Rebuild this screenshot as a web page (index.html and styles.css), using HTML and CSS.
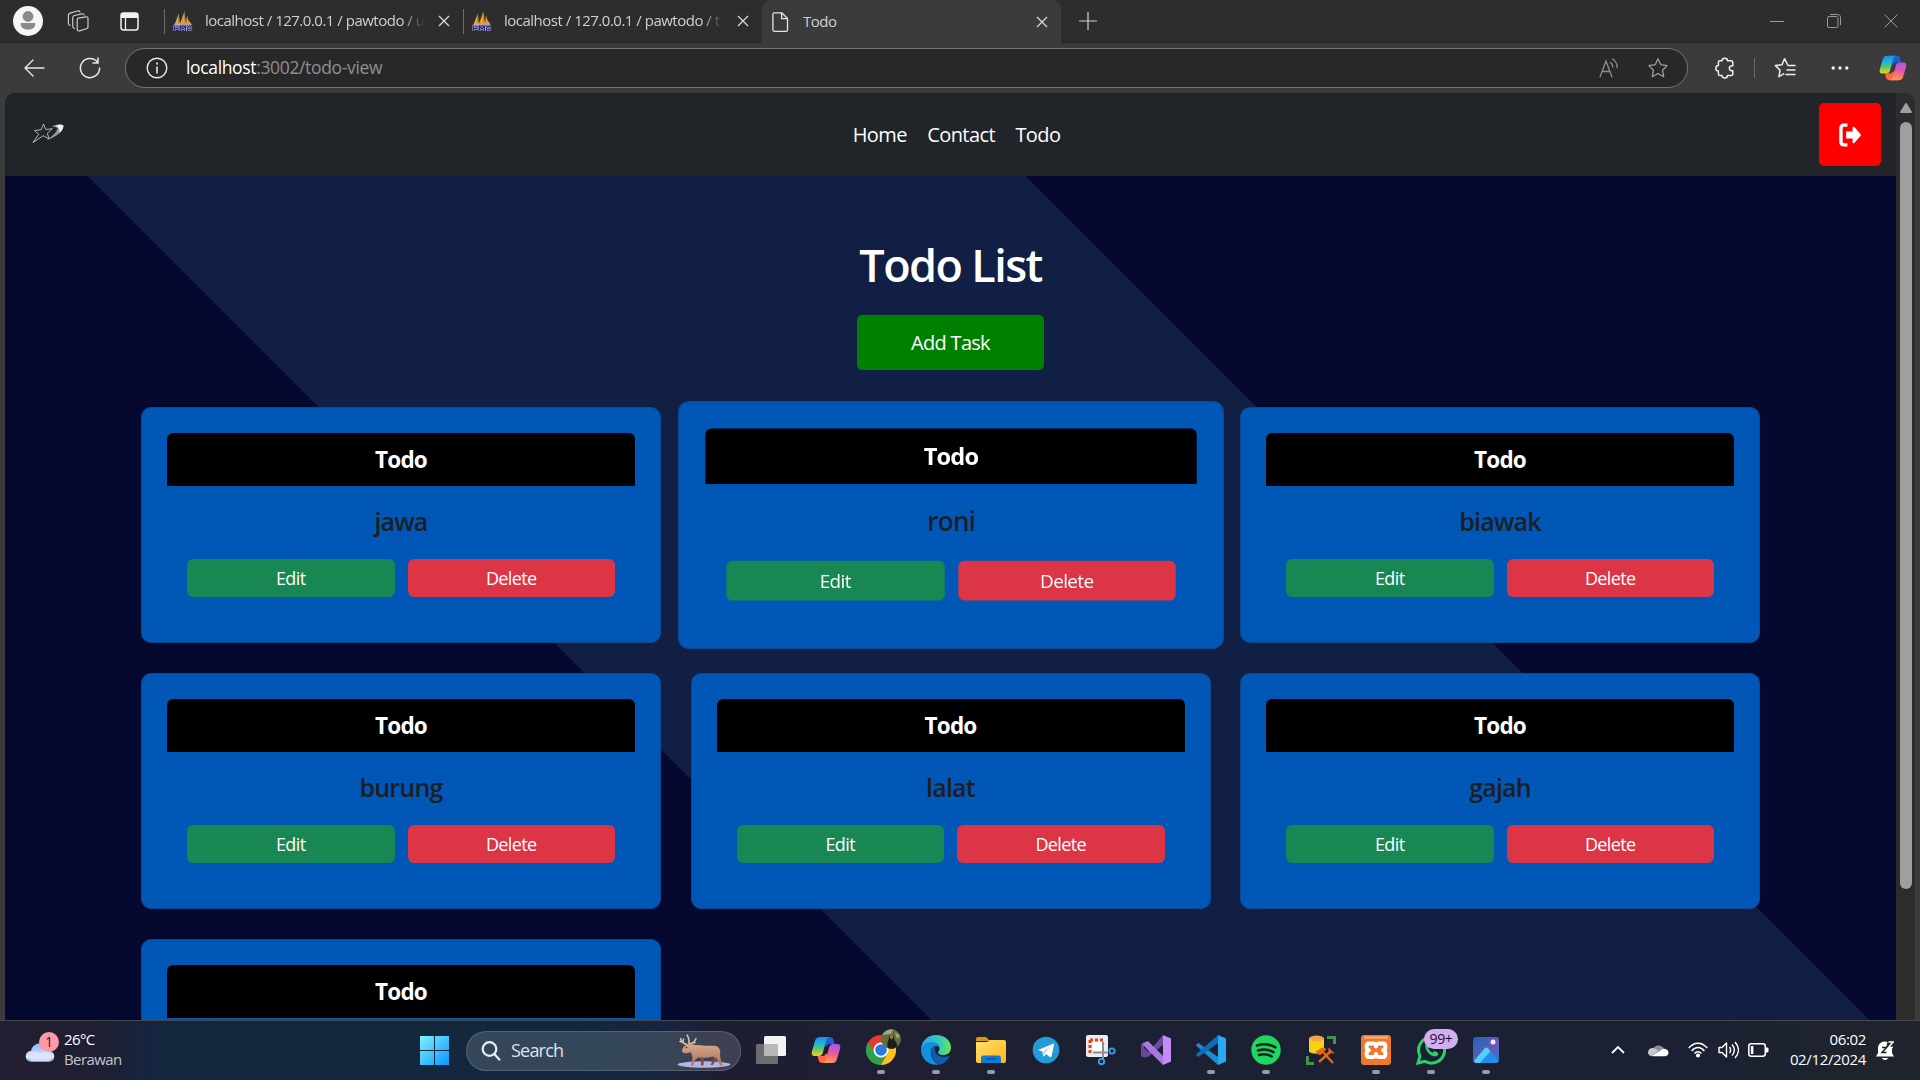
FILE: index.html
```html
<!DOCTYPE html>
<html lang="en">
<head>
<meta charset="utf-8">
<title>Todo</title>
<link rel="stylesheet" href="styles.css">
</head>
<body>
<svg class="defs" aria-hidden="true">
  <defs>
    <linearGradient id="cpA" x1="0" y1="0" x2="0" y2="1"><stop offset="0" stop-color="#1f8df5"/><stop offset=".35" stop-color="#22b3dc"/><stop offset=".65" stop-color="#66c95e"/><stop offset="1" stop-color="#f7d01c"/></linearGradient>
    <linearGradient id="cpB" x1="0.6" y1="0" x2="0.4" y2="1"><stop offset="0" stop-color="#a259f0"/><stop offset=".5" stop-color="#ec5a9c"/><stop offset="1" stop-color="#ff9a4d"/></linearGradient>
    <linearGradient id="win" x1="0" y1="0" x2="1" y2="1"><stop offset="0" stop-color="#7df3ff"/><stop offset="1" stop-color="#0a95ff"/></linearGradient>
    <linearGradient id="edgeA" x1="0" y1="0" x2="1" y2="0"><stop offset="0" stop-color="#2aa5e6"/><stop offset=".6" stop-color="#35c9bd"/><stop offset="1" stop-color="#67e84d"/></linearGradient>
    <linearGradient id="fold" x1="0" y1="0" x2="1" y2="1"><stop offset="0" stop-color="#ffdf72"/><stop offset="1" stop-color="#fbb716"/></linearGradient>
    <linearGradient id="cld" x1="0" y1="0" x2="0" y2="1"><stop offset="0" stop-color="#8db1f4"/><stop offset=".75" stop-color="#dbe6fb"/><stop offset="1" stop-color="#7c9be0"/></linearGradient>
    <linearGradient id="photo" x1="0" y1="0" x2="1" y2="1"><stop offset="0" stop-color="#1767b8"/><stop offset=".6" stop-color="#6b5bb8"/><stop offset="1" stop-color="#1f7ad0"/></linearGradient>
    <linearGradient id="moose" x1="0" y1="0" x2="0" y2="1"><stop offset="0" stop-color="#d8a68a"/><stop offset="1" stop-color="#a8745a"/></linearGradient>
    <symbol id="copilot" viewBox="0 0 30 30">
      <path d="M9 2h10c2 0 3 1 3.600 3l1 4h-5c-2 0-3 1-3.500 3z" fill="#1c5fd6"/>
      <path d="M21 28H11c-2 0-3-1-3.500-3l-1-4h5c2 0 3-1 3.500-3z" fill="#ff6a45"/>
      <path d="M9 2h9c-2 1-2.800 3-3.500 6l-2.600 9.500c-.7 2.500-2 3.500-4 3.500H4c-3 0-3.800-2-3-5L4 6c.8-3 2.500-4 5-4z" fill="url(#cpA)"/>
      <path d="M21 28h-9c2-1 2.800-3 3.500-6l2.600-9.500c.7-2.500 2-3.500 4-3.500H26c3 0 3.800 2 3 5l-3 10c-.8 3-2.500 4-5 4z" fill="url(#cpB)"/>
    </symbol>
    <symbol id="pma" viewBox="0 0 20 20">
      <path d="M5.800 2.500L5 13.500H1.500z" fill="#f6a21b"/><path d="M5.800 2.500l1.200 11H5z" fill="#a8a49c"/>
      <path d="M11.500.200L11 13.200H6.800z" fill="#f79a12"/><path d="M11.500.200l1.600 12.800H11z" fill="#a8a49c"/>
      <path d="M14 4.500l1.300 4.500 3.200 4H13z" fill="#f79a12"/><path d="M1.500 13.800h17" stroke="#d5d0c8" stroke-width="1"/>
      <path d="M1.500 20v-5H5v2.500H1.500M7.500 20v-5l2.500 3 2.500-3v5M14.500 20v-3l1.800-2 1.800 2v3m-3.600-1.500h3.600" fill="none" stroke="#c9c9f0" stroke-width="2"/>
      <path d="M1.500 20v-5H5v2.500H1.500M7.500 20v-5l2.500 3 2.500-3v5M14.500 20v-3l1.800-2 1.800 2v3m-3.600-1.500h3.600" fill="none" stroke="#2b2b86" stroke-width="1.200"/>
    </symbol>
    <symbol id="x" viewBox="0 0 12 12"><path d="M1 1l10 10M11 1L1 11" stroke="currentColor" stroke-width="1.300" fill="none"/></symbol>
    <symbol id="star" viewBox="0 0 22 22"><path d="M11 1.800l2.800 5.900 6.300.900-4.600 4.600 1.200 6.500L11 16.500l-5.700 3.200 1.200-6.500L1.900 8.600l6.300-.9z" fill="none" stroke="currentColor" stroke-width="1.300" stroke-linejoin="round"/></symbol>
  </defs>
</svg>

<div class="tabstrip">
  <svg class="profile" viewBox="0 0 30 30"><circle cx="15" cy="15" r="15" fill="#f5f5f5"/><circle cx="15" cy="10.500" r="5" fill="#8b8b8b" stroke="#666" stroke-width=".6"/><path d="M8 17.500h14c0 4-3 5.700-7 5.700s-7-1.700-7-5.700z" fill="#8b8b8b" stroke="#666" stroke-width=".6"/></svg>
  <svg class="workspaces" viewBox="0 0 22 22" fill="none" stroke="#c9c9c9" stroke-width="1.200" stroke-linejoin="round" stroke-linecap="round"><path d="M11.500 8.200l7.500-1.400c1.300-.2 2 .4 2 1.600v8.400c0 1-.5 1.700-1.500 2l-7 2c-1.400.4-2.300-.3-2.300-1.600V10c0-1 .4-1.600 1.300-1.800z"/><path d="M7.500 18.500c-1.200-.3-1.800-1-1.800-2.200V7.800c0-1.300.6-2 1.800-2.300l7.500-1.700c1.200-.2 2 .2 2.200 1.200"/><path d="M3 15.500c-1-.3-1.600-1-1.600-2.200V5.500c0-1.300.6-2 1.700-2.400L10.500 1c1.200-.3 2 0 2.400 1"/></svg>
  <svg class="tabactions" viewBox="0 0 19 19"><rect x="1" y="1" width="17" height="17" rx="2.500" fill="none" stroke="#f2f2f2" stroke-width="1.500"/><path d="M1 3.500C1 2 2 1 3.500 1h12C17 1 18 2 18 3.500V6H1z" fill="#f2f2f2"/><path d="M5.500 6v12" stroke="#f2f2f2" stroke-width="1.300"/></svg>
  <div class="tab">
    <svg class="favicon"><use href="#pma"/></svg>
    <span class="tab-title faded">localhost / 127.0.0.1 / pawtodo / u</span>
    <svg class="close"><use href="#x"/></svg>
  </div>
  <div class="tab">
    <svg class="favicon"><use href="#pma"/></svg>
    <span class="tab-title faded">localhost / 127.0.0.1 / pawtodo / t</span>
    <svg class="close"><use href="#x"/></svg>
  </div>
  <div class="tab active">
    <svg class="favicon" viewBox="0 0 20 20" fill="none" stroke="#e4e4e4" stroke-width="1.300" stroke-linejoin="round"><path d="M3.500.800h7.300l5.700 5.700v11.200c0 1-.6 1.600-1.600 1.600H3.500c-1 0-1.600-.6-1.600-1.600V2.400C1.900 1.400 2.500.8 3.500.8zM10.600.9v5.800h5.800"/></svg>
    <span class="tab-title">Todo</span>
    <svg class="close"><use href="#x"/></svg>
  </div>
  <svg class="newtab" viewBox="0 0 18 18"><path d="M9 0v18M0 9h18" stroke="#d0d0d0" stroke-width="1.200"/></svg>
  <div class="wincontrols">
    <svg viewBox="0 0 14 14"><path d="M0 7.500h14" stroke="#9a9a9a"/></svg>
    <svg viewBox="0 0 14 14" fill="none" stroke="#9a9a9a"><rect x=".5" y="2.500" width="10.500" height="11" rx="1.500"/><path d="M3 .5h7.500c2 0 3 1 3 3V11"/></svg>
    <svg viewBox="0 0 14 14"><path d="M.5.500l13 13M13.500.500l-13 13" stroke="#9a9a9a"/></svg>
  </div>
</div>

<div class="toolbar">
  <svg class="back" viewBox="0 0 21 18" fill="none" stroke="#e8e8e8" stroke-width="1.400" stroke-linecap="round" stroke-linejoin="round"><path d="M20 9H1M9 1L1 9l8 8"/></svg>
  <svg class="reload" viewBox="0 0 22 22" fill="none" stroke="#e8e8e8" stroke-width="1.500" stroke-linecap="round"><path d="M18.500 5A9.600 9.600 0 1 0 20.600 11M19 1v5h-5"/></svg>
  <div class="address">
    <svg class="info" viewBox="0 0 22 22" fill="none" stroke="#e8e8e8" stroke-width="1.400"><circle cx="11" cy="11" r="9.800"/><path d="M11 9.500v7" stroke-width="1.600"/><path d="M11 5.500v2" stroke-width="1.800"/></svg>
    <span class="url"><b>localhost</b>:3002/todo-view</span>
    <svg class="read" viewBox="0 0 20 20" fill="none" stroke="#8f8f8f" stroke-width="1.300" stroke-linecap="round"><path d="M1 19L7 3l6 16M3.200 13.500h7.600M11.500 4.500c1.500 1 2.300 2.500 2.300 4.500M13.500 1c3 1.800 4.700 4.500 4.700 8.500"/></svg>
    <svg class="fav"><use href="#star"/></svg>
  </div>
  <svg class="puzzle" viewBox="0 0 20 22" fill="none" stroke="#efefef" stroke-width="1.500" stroke-linejoin="round"><path d="M7 3.800C7 .500 12.500.500 12.500 3.800h3.700c1 0 1.600.6 1.600 1.600v3.300c-4.600-.5-4.600 5.500 0 5v3.200c0 1-.6 1.600-1.600 1.600h-3.700c0 3.300-5.500 3.300-5.500 0H5c-1 0-1.600-.6-1.600-1.600V14C0 14 0 8.400 3.400 8.400v-3c0-1 .6-1.600 1.600-1.600z"/></svg>
  <span class="tbsep"></span>
  <svg class="favlist" viewBox="0 0 22 22" fill="none" stroke="#efefef" stroke-width="1.500" stroke-linejoin="round" stroke-linecap="round"><path d="M13.500 7.500L10.500 1.700 8 7.700l-6.500.9 4.600 4.600-1.200 6.500 4.800-2.800M14 8.500h7M13 13h8M12 17.500h9"/></svg>
  <svg class="dots" viewBox="0 0 18 6" fill="#efefef"><circle cx="2.200" cy="3" r="1.700"/><circle cx="9" cy="3" r="1.700"/><circle cx="15.800" cy="3" r="1.700"/></svg>
  <svg class="tb-copilot"><use href="#copilot"/></svg>
</div>

<div class="viewport">
  <div class="page">
    <nav class="navbar">
      <svg class="logo" viewBox="0 0 34 24"><path d="M12.500 3l2.200 5.500 6.600-.8-5 4.600 1.900 5.700-6-3.300L2 21.500l5.800-8.300L3.500 9.500l6.600-.7z" fill="none" stroke="#d2d2d2" stroke-width="1" opacity=".8"/><path d="M20.500 5.700C25 3.400 29 2.600 32.500 4.500c-.3 4.500-3.500 8.200-8 10.500-3 2-6 3-9.500 4 5-2.500 11-7.500 11.500-12-1.200-1-3.500-1.200-6-1.300z" fill="#d8d6da" opacity=".65"/><path d="M24 5C27 3.300 30 3 32.500 4.500c0 2.500-1.500 5.500-4 7.500.3-3.500-.5-6.300-4.500-7z" fill="#f3f0f4"/></svg>
      <div class="links"><a>Home</a><a>Contact</a><a>Todo</a></div>
      <div class="logout"><svg viewBox="0 0 26 28"><path d="M10 2.500H6C3.600 2.500 2.400 3.600 2.400 6v16c0 2.400 1.200 3.500 3.600 3.500h4" fill="none" stroke="#fff" stroke-width="4"/><path d="M8.500 11.200c0-.8.5-1.200 1.200-1.200H16V5.500c0-1.200 1.300-1.600 2.100-.8l7.300 8.300c.6.600.6 1.400 0 2l-7.300 8.300c-.8.800-2.100.400-2.100-.8V18H9.700c-.7 0-1.200-.4-1.200-1.200z" fill="#fff"/></svg></div>
    </nav>
    <main class="content">
      <h1>Todo List</h1>
      <div class="add">Add Task</div>
      <div class="grid">
        <div class="card"><div class="head">Todo</div><p>jawa</p><div class="actions"><span class="edit">Edit</span><span class="delete">Delete</span></div></div>
        <div class="card hovered"><div class="head">Todo</div><p>roni</p><div class="actions"><span class="edit">Edit</span><span class="delete">Delete</span></div></div>
        <div class="card"><div class="head">Todo</div><p>biawak</p><div class="actions"><span class="edit">Edit</span><span class="delete">Delete</span></div></div>
        <div class="card"><div class="head">Todo</div><p>burung</p><div class="actions"><span class="edit">Edit</span><span class="delete">Delete</span></div></div>
        <div class="card"><div class="head">Todo</div><p>lalat</p><div class="actions"><span class="edit">Edit</span><span class="delete">Delete</span></div></div>
        <div class="card"><div class="head">Todo</div><p>gajah</p><div class="actions"><span class="edit">Edit</span><span class="delete">Delete</span></div></div>
        <div class="card"><div class="head">Todo</div></div>
      </div>
    </main>
  </div>
  <div class="scrollbar"><svg viewBox="0 0 12 10"><path d="M6 0c.5 0 .8.300 1 .7l4.800 8c.3.700 0 1.300-.8 1.300H1c-.8 0-1.100-.6-.8-1.300L5 .7C5.200.3 5.500 0 6 0z" fill="#a0a0a0"/></svg><div class="thumb"></div></div>
</div>

<div class="taskbar">
  <div class="weather">
    <div class="wicon">
      <svg viewBox="0 0 32 22"><path d="M7 21a6 6 0 0 1-.5-12A10 10 0 0 1 16 1c6 0 9 3.500 9.500 8A6 6 0 0 1 25 21z" fill="url(#cld)"/><path d="M7 20a5.500 5.500 0 0 1 0-9c3-2 7-1 9 1 3-2.500 8-3 11 0 2 3 1 6.500-2 8z" fill="#dbe7fc" opacity=".8"/></svg>
      <span class="wbadge">1</span>
    </div>
    <div class="wtext"><span>26°C</span><span class="dim">Berawan</span></div>
  </div>
  <svg class="start" viewBox="0 0 29 29"><path d="M0 0h14v14H0zM15 0h14v14H15zM0 15h14v14H0zM15 15h14v14H15z" fill="url(#win)"/></svg>
  <div class="search">
    <svg class="mag" viewBox="0 0 20 20" fill="none" stroke="#eceff2" stroke-width="2.200" stroke-linecap="round"><circle cx="8.500" cy="8" r="6.800"/><path d="M13.300 13l5 5.500"/></svg>
    <span>Search</span>
    <svg class="moosepic" viewBox="0 0 54 34"><ellipse cx="27" cy="30.500" rx="26.500" ry="3.200" fill="#b3b4e2"/><path d="M20 21l4 5v5.500h2.400l.6-8zM37 21l-1 5-2.500 5h2.300l4.700-7z" fill="#7e503b"/><path d="M5 16c.8-3 3-5 6-5.500 3-.5 5 0 8 .7 4-.7 8 .8 12 .6 4 0 8-.6 10.500 1.700 2 2 2 5 1.500 7.500.2 3 1.200 6.500 2.500 10.500h-2.300L39.500 24l-4-1.500c-4 1.500-9 1.500-14 .8L18 26l-1.800 5.500H14l1.500-8-1.500-5.300-4.500 1c-2.500.5-5-.7-4.500-3.200z" fill="url(#moose)"/><path d="M10 10.500C7 10 4.500 8 3.500 4.500M5.500 8L3 7.500M12 10c0-3 .5-6-2-9M13 9.500c3 0 5-2 6-5M15 9l3-.5M6 8l.5-3" fill="none" stroke="#dcc0aa" stroke-width="1.500" stroke-linecap="round"/><circle cx="9.500" cy="13.500" r=".8" fill="#30201a"/></svg>
  </div>
  <div class="apps">
    <div class="app"><svg viewBox="0 0 30 30"><rect x="8" y="1" width="22" height="20" rx="1.500" fill="#f3f3f3"/><rect x="0" y="9" width="22" height="20" rx="1.500" fill="#6d6d6d"/><path d="M8 9h12.500c1 0 1.500.500 1.500 1.500V21H9.500C8.500 21 8 20.500 8 19.500z" fill="#b8b8b8"/></svg></div>
    <div class="app"><svg><use href="#copilot"/></svg></div>
    <div class="app run"><svg viewBox="0 0 30 30"><circle cx="15" cy="15" r="15" fill="#e33b2e"/><path d="M2 7.500A15 15 0 0 0 15 30l6.500-11.500H8.500z" fill="#2ba24c"/><path d="M15 30A15 15 0 0 0 28 7.500H15l6.500 11.200z" fill="#fcc31e"/><circle cx="15" cy="15" r="7.500" fill="#fff"/><circle cx="15" cy="15" r="5.800" fill="#2b78e4"/></svg>
      <svg class="avatar" viewBox="0 0 20 20"><circle cx="10" cy="10" r="10" fill="#5f6e3a"/><path d="M1 6c3-5 8-6 11-5.500L10 5zM14 3l5 4-3 3z" fill="#a7a57b"/><path d="M7 19c-2-5 1-8 1-10 0-4 5-4 5 0 0 3 4 5 3 8-2 3-6 3.500-9 2z" fill="#1c1e18"/><path d="M9 8c0-3 3-3 3 0s-3 3-3 0z" fill="#9c7358"/></svg></div>
    <div class="app run"><svg viewBox="0 0 30 30"><path d="M0 15C0 6 7 0 15 0c9 0 15 6 15 12.500 0 5-3.500 7.500-8 7.500-3 0-5-1-5-2.500 0-1 1.500-1.500 1.500-4C18.500 10 15 8 11 8 5 8 1 12 0 15z" fill="url(#edgeA)"/><path d="M0 15C1 10 5 7 11 7c5 0 8 3 8 6.500 0 0-1-2.500-4-2.500-3.500 0-5 3.500-5 7C10 25 16 29.500 18 29.700 8 31 0 24 0 15z" fill="#1290e0"/><path d="M10.500 18c0-4 2-6.800 4.500-7-2 2.500-1.500 9 5 10.500 4 1 7-1 8.500-.5.5.5-3.500 8-10.500 8.700-4-1-7.500-6-7.500-11.700z" fill="#145ba8"/></svg></div>
    <div class="app run"><svg viewBox="0 0 30 30"><path d="M0 4c0-1.200.8-2 2-2h8l4 4H0z" fill="#d9970a"/><path d="M0 7h11l3-2h14c1.200 0 2 .8 2 2v19c0 1.200-.8 2-2 2H2c-1.200 0-2-.8-2-2z" fill="url(#fold)"/><path d="M5 28v-5c0-1.500 1-2.500 2.500-2.500h15c1.500 0 2.500 1 2.500 2.500v5z" fill="#1479d0"/><path d="M10 24h10" stroke="#0b549c" stroke-width="1.500"/></svg></div>
    <div class="app"><svg viewBox="0 0 30 30"><circle cx="15" cy="15" r="13.300" fill="#239bd8"/><path d="M7 15l15-6.300c.8-.3 1.300.1 1 1l-2.500 11.500c-.2 1-.8 1.200-1.600.7l-3.700-2.700-2 1.900c-.5.500-1 .3-1.100-.3l-.8-4.300z" fill="#fff"/><path d="M12 17l8-6-6 6.500-.5 3z" fill="#a8cfe8"/></svg></div>
    <div class="app"><svg viewBox="0 0 30 30"><rect x="0" y="0" width="22" height="22" rx="2" fill="#ececee"/><path d="M4 5h14M4 5v13" fill="none" stroke="#d9441b" stroke-width="3" stroke-dasharray="3 2"/><path d="M7 7h9v9H7z" fill="#fff"/><path d="M17 7v17M7 17.500h15" stroke="#8b9098" stroke-width="2"/><circle cx="26" cy="16" r="2.700" fill="none" stroke="#2ea3e6" stroke-width="1.800"/><circle cx="15.500" cy="26.500" r="2.700" fill="none" stroke="#2ea3e6" stroke-width="1.800"/></svg></div>
    <div class="app"><svg viewBox="0 0 30 30"><path d="M0 9v12l3 1.500L8 17 3 13V7.500z" fill="#6b479c"/><path d="M3 22.500L22 0l1 9L7 22z" fill="#6e4aa0"/><path d="M2 8l5-2 15 15v9L2 10z" fill="#a878e0"/><path d="M22 0l8 3.500v23L22 30z" fill="#c58cf7"/></svg></div>
    <div class="app run"><svg viewBox="0 0 30 30"><path d="M0 10l2.500-2L22 22v8L.5 11z" fill="#1f8ad2"/><path d="M0 20l2.500 2L22 8V0L.5 19z" fill="#0b6fb8"/><path d="M22 0l8 3.500v23L22 30z" fill="#2aa9f3"/></svg></div>
    <div class="app run"><svg viewBox="0 0 30 30"><circle cx="15" cy="15" r="14.700" fill="#1ed760"/><path d="M6 10.500c6-2 13-1.300 18.500 1.800M7 15.500c5-1.500 11-1 15.500 1.600M8 20c4-1.200 9-.8 12.800 1.500" fill="none" stroke="#10251a" stroke-width="2.600" stroke-linecap="round"/></svg></div>
    <div class="app"><svg viewBox="0 0 30 30"><path d="M3 3v13c0 3.500 15 3.500 15 0V3z" fill="#f5d312"/><ellipse cx="10.500" cy="3.500" rx="7.500" ry="3" fill="#f0a64c"/><path d="M21 2.500h7.500V9M1.500 21v7.500H8" fill="none" stroke="#43944a" stroke-width="3"/><path d="M13 27l12-11M15 15l12 13" stroke="#e8680e" stroke-width="2.400"/><path d="M10 17l6-4 4 1-6 6zM23 13v4l5 1" fill="#e8680e" stroke="#e8680e"/></svg></div>
    <div class="app run"><svg viewBox="0 0 30 30"><rect x="0" y="0" width="30" height="30" rx="3" fill="#f0772b"/><path d="M3 2.500h24" stroke="#f7b48a" stroke-width="2"/><path d="M8 8.500h4.500c1.500 0 2.500 1.500 2.500 3 0-1.500 1-3 2.500-3H22c3.200 0 3.200 6.500 0 6.700 3.200.3 3.200 6.800 0 6.800h-4.500c-1.500 0-2.500-1.500-2.500-3 0 1.500-1 3-2.500 3H8c-3.200 0-3.200-6.500 0-6.800-3.200-.2-3.200-6.700 0-6.700z" fill="none" stroke="#fff" stroke-width="4" stroke-linejoin="round"/></svg></div>
    <div class="app run"><svg viewBox="0 0 30 30"><path d="M2 28l2-7A13 13 0 1 1 9 26.300z" fill="none" stroke="#25d366" stroke-width="3"/><path d="M9.500 9c1-1.500 2.500-1.300 3 0l1 2.500-1.300 2c1 2 2.500 3.300 4.500 4.200l1.800-1.600 3 1.300c1.300.7 1 2.600-.7 3.600-5 2.300-13-5.500-11.300-12z" fill="#25d366"/></svg><span class="count">99+</span></div>
    <div class="app run"><svg viewBox="0 0 30 30"><rect x="2" y="2" width="26" height="26" rx="3" fill="url(#photo)"/><path d="M3 26l10.500-12.500c1-1.200 2.300-1.200 3.500 0L27.500 26c-.7 1.300-1.500 2-3 2H6c-1.500 0-2.400-.7-3-2z" fill="#1e90e8"/><path d="M3 26l10.500-12.500c1-1.200 2.300-1.200 3.500 0l2.500 2.800L9 28H6c-1.500 0-2.400-.7-3-2z" fill="#4fd0fa"/><circle cx="22" cy="7" r="2.500" fill="#efeafa"/></svg></div>
  </div>
  <div class="tray">
    <svg class="chev" viewBox="0 0 14 9"><path d="M1 8l6-6 6 6" fill="none" stroke="#fff" stroke-width="1.800"/></svg>
    <svg class="cloud" viewBox="0 0 21 14"><path d="M5 6a6 6 0 0 1 11 0l-6 4-7 2z" fill="#8d9198"/><path d="M0 9.500C0 7 2 5 4.500 5c2 0 4 1.500 6 2.700L3 13C1.200 12.600 0 11.500 0 9.500z" fill="#c5c7cb"/><path d="M3 13l9-5c1-1.500 2.500-2.500 4.500-2.300C19 6 20.500 7.500 20.500 9.500S19 13.300 16.500 13.300H4.500z" fill="#fff"/></svg>
    <svg class="wifi" viewBox="0 0 20 16" fill="none" stroke="#fff" stroke-width="1.500"><path d="M.8 6C6-.5 14-.5 19.200 6M3.600 9C7.500 4.400 12.500 4.400 16.400 9M6.500 11.500c2-2.500 5-2.500 7 0"/><circle cx="10" cy="13.500" r="1.300" fill="#fff"/></svg>
    <svg class="vol" viewBox="0 0 21 18" fill="none" stroke="#fff" stroke-width="1.400" stroke-linejoin="round"><path d="M1 6.500v5h3L8.500 16V2L4 6.500zM11.500 6c1.500 2 1.500 4 0 6M14 3.500c3 3.500 3 7.500 0 11M17 1c4.500 5 4.500 11 0 16"/></svg>
    <svg class="bat" viewBox="0 0 21 14"><rect x=".8" y=".8" width="16.500" height="12.400" rx="2.500" fill="none" stroke="#fff" stroke-width="1.500"/><rect x="2.800" y="3" width="2.600" height="8" rx=".6" fill="#fff"/><path d="M18 4.500h1c1 0 1.500.500 1.500 1.500v2c0 1-.5 1.500-1.500 1.500h-1z" fill="#fff"/></svg>
    <div class="clock"><span>06:02</span><span>02/12/2024</span></div>
    <svg class="bell" viewBox="0 0 18 19"><path d="M0 15.500l2-3.500V7a6.800 6.800 0 0 1 9.500-6l-1.500 6h6v5l2 3.500zM6 17h6c-.5 2.500-5.500 2.500-6 0z" fill="#fff"/><path d="M6 6.500h4.500L6 11.500h4.500" fill="none" stroke="#1c2130" stroke-width="1.500"/><path d="M12.500 1H17l-4.500 5.500H17" fill="none" stroke="#fff" stroke-width="1.500"/></svg>
  </div>
</div>
</body>
</html>
```
FILE: styles.css
```css
* { box-sizing: border-box; }
body {
  margin: 0;
  width: 1920px;
  height: 1080px;
  overflow: hidden;
  display: flex;
  flex-direction: column;
  background: #3b3b3b;
  font-family: "Open Sans", "Noto Sans", sans-serif;
  color: #fff;
}
svg { display: block; flex: none; }
.defs { position: absolute; width: 0; height: 0; }

/* tab strip */
.tabstrip {
  height: 43px;
  flex: none;
  display: flex;
  align-items: center;
  background: #2d2d2d;
  padding-left: 13px;
  border-bottom: 1px solid #262626;
}
.profile { width: 30px; height: 30px; }
.workspaces { width: 22px; height: 22px; margin-left: 24px; }
.tabactions { width: 19px; height: 19px; margin-left: 31px; margin-right: 1px; }
.tab {
  width: 299px;
  height: 43px;
  display: flex;
  align-items: center;
  padding: 0 13px 0 9px;
  color: #cfcfcf;
}
.tab:not(.active) { position: relative; }
.tab:not(.active)::before {
  content: "";
  position: absolute;
  left: 0;
  top: 9px;
  width: 1px;
  height: 25px;
  background: #6c6c6c;
}
.tabactions + .tab { margin-left: 24px; }
.tab .favicon { width: 20px; height: 20px; }
.tab-title {
  flex: 1;
  margin: 0 9px 0 12px;
  font-size: 15px;
  line-height: 20px;
  letter-spacing: -.5px;
  white-space: nowrap;
  overflow: hidden;
  padding-bottom: 2px;
}
.faded {
  -webkit-mask-image: linear-gradient(90deg, #000 88%, transparent 98%);
  mask-image: linear-gradient(90deg, #000 88%, transparent 98%);
}
.close { width: 12px; height: 12px; color: #d8d8d8; }
.tab.active {
  background: #3b3b3b;
  border-radius: 9px 9px 0 0;
  align-self: flex-start;
}
.newtab { width: 18px; height: 18px; margin-left: 18px; }
.wincontrols { margin-left: auto; display: flex; gap: 43px; padding-right: 22px; }
.wincontrols svg { width: 14px; height: 14px; }

/* toolbar */
.toolbar {
  height: 50px;
  flex: none;
  display: flex;
  align-items: center;
  padding-left: 24px;
}
.back { width: 21px; height: 18px; }
.reload { width: 22px; height: 22px; margin-left: 34px; }
.address {
  margin-left: 24px;
  width: 1563px;
  height: 40px;
  border: 1px solid #747474;
  border-radius: 20px;
  background: #282828;
  display: flex;
  align-items: center;
  padding: 0 18px 0 20px;
}
.info { width: 22px; height: 22px; }
.url { margin-left: 18px; font-size: 17.500px; line-height: 24px; letter-spacing: -.35px; color: #8f8f8f; flex: 1; padding-bottom: 2px; }
.url b { font-weight: 400; color: #fff; }
.read { width: 20px; height: 20px; margin-right: 28px; }
.fav { width: 22px; height: 22px; color: #9c9c9c; }
.puzzle { width: 20px; height: 22px; margin-left: 27px; }
.tbsep { width: 1px; height: 20px; background: #686868; margin-left: 19px; }
.favlist { width: 22px; height: 22px; margin-left: 19px; }
.dots { width: 18px; height: 6px; margin-left: 35px; }
.tb-copilot { width: 28px; height: 28px; margin-left: 30px; }

/* page */
.viewport {
  height: 927px;
  flex: none;
  margin: 0 5px;
  display: flex;
  border-radius: 10px 10px 0 0;
  overflow: hidden;
  background: #2c2c2c;
}
.page { width: 1891px; display: flex; flex-direction: column; }
.navbar {
  height: 83px;
  flex: none;
  display: flex;
  align-items: center;
  justify-content: space-between;
  background: #212529;
  padding: 0 15px 0 26px;
}
.logo { width: 34px; height: 24px; margin-bottom: 3px; }
.links { display: flex; gap: 20.500px; font-size: 20px; letter-spacing: -.6px; margin-left: 29px; }
.logout {
  width: 62px;
  height: 63px;
  border-radius: 5px;
  background: #f00;
  display: flex;
  align-items: center;
  justify-content: center;
}
.logout svg { width: 26px; height: 24px; }
.content {
  flex: 1;
  min-height: 0;
  display: flex;
  flex-direction: column;
  align-items: center;
  padding-top: 59px;
  background: linear-gradient(45deg, #05082f 655px, #101f43 655.500px, #101f43 1318px, #05082f 1318.500px);
}
h1 { margin: 0; height: 60px; font-size: 45px; line-height: 60px; font-weight: 600; letter-spacing: -1.600px; }
.add {
  width: 187px;
  height: 55px;
  margin-top: 20px;
  border-radius: 5px;
  background: green;
  font-size: 20px;
  line-height: 55px;
  letter-spacing: -.7px;
  text-align: center;
}
.grid {
  display: grid;
  grid-template-columns: repeat(3, 520px);
  grid-auto-rows: 236px;
  gap: 30px 29.500px;
  margin-top: 37px;
}
.card {
  background: #0057b5;
  border: 1px solid #0a4a95;
  border-radius: 10px;
  padding: 25px;
  text-align: center;
}
.card.hovered { transform: scale(1.050); }
.head {
  height: 53px;
  border-radius: 6px 6px 0 0;
  background: #000;
  font-size: 22.500px;
  font-weight: 700;
  line-height: 54px;
  letter-spacing: -.8px;
}
.card p {
  margin: 19px 0 0;
  font-size: 25px;
  line-height: 32px;
  font-weight: 600;
  letter-spacing: -.8px;
  color: #1c1f22;
}
.actions { display: flex; gap: 13px; padding: 0 20px; margin-top: 22px; }
.actions span {
  flex: 1;
  height: 38px;
  border-radius: 6px;
  font-size: 18px;
  line-height: 38px;
  letter-spacing: -.6px;
}
.edit { background: #198754; }
.delete { background: #dc3545; }
.scrollbar { width: 19px; display: flex; flex-direction: column; align-items: center; padding-top: 10px; }
.scrollbar svg { width: 12px; height: 10px; }
.thumb { width: 12px; height: 767px; margin-top: 9px; border-radius: 6px; background: #9f9f9f; }

/* taskbar */
.taskbar {
  height: 60px;
  flex: none;
  display: flex;
  align-items: center;
  border-top: 1px solid #45474c;
  background: linear-gradient(90deg, #201e30 0, #201f32 95px, #14253f 150px, #14273d 220px, #14273d 580px, #182540 660px, #1e1e32 720px, #1e1f32 940px, #1b2132 1100px, #1b2132 1700px, #20242c 1920px);
}
.weather { display: flex; width: 420px; padding-left: 25px; align-items: center; }
.wicon { position: relative; width: 30px; height: 40px; padding-top: 16px; margin-top: -10px; }
.wicon svg { width: 30px; height: 21px; }
.wbadge {
  position: absolute;
  left: 14px;
  top: 6px;
  width: 20px;
  height: 20px;
  border-radius: 50%;
  background: #ff99a4;
  color: #201f2c;
  font-size: 14px;
  line-height: 20px;
  text-align: center;
}
.wtext { display: flex; flex-direction: column; margin-left: 9px; padding-bottom: 4px; font-size: 15px; line-height: 20px; letter-spacing: -.6px; }
.dim { color: #c4c5ca; }
.start { width: 29px; height: 29px; }
.search {
  width: 275px;
  height: 40px;
  margin-left: 17px;
  border-radius: 20px;
  border: 1px solid rgba(255, 255, 255, .16);
  background: linear-gradient(90deg, #35475a 0, #35465a 65%, #3f3f50 100%);
  display: flex;
  align-items: center;
  padding: 0 9px 0 14px;
}
.mag { width: 20px; height: 20px; }
.search span { flex: 1; margin-left: 10px; font-size: 18px; letter-spacing: -.8px; line-height: 24px; color: #dfe2e6; padding-bottom: 1px; }
.moosepic { width: 54px; height: 34px; }
.apps { display: flex; margin-left: 2px; }
.app { width: 55px; height: 59px; padding: 14px 0 0 12.500px; position: relative; }
.app svg { width: 30px; height: 30px; }
.app.run::after {
  content: "";
  position: absolute;
  left: 23.500px;
  top: 49px;
  width: 8px;
  height: 4px;
  border-radius: 2px;
  background: #9a9ba2;
}
.app svg.avatar { position: absolute; left: 28px; top: 8px; width: 20px; height: 20px; }
.count {
  position: absolute;
  left: 21px;
  top: 8px;
  width: 34px;
  height: 20px;
  border-radius: 10px;
  background: #d2aef0;
  color: #1d1530;
  font-size: 14px;
  line-height: 20px;
  letter-spacing: -.3px;
  text-align: center;
}
.tray { display: flex; align-items: center; margin-left: auto; padding-right: 26px; }
.chev { width: 14px; height: 9px; margin-bottom: 2px; }
.cloud { width: 21px; height: 14px; margin-left: 23px; margin-bottom: 2px; }
.wifi { width: 20px; height: 16px; margin-left: 19px; margin-bottom: 1px; }
.vol { width: 21px; height: 18px; margin-left: 10px; margin-bottom: 1px; }
.bat { width: 21px; height: 14px; margin-left: 9px; margin-bottom: 1px; }
.clock { display: flex; flex-direction: column; width: 97px; padding-bottom: 4px; text-align: right; font-size: 15px; line-height: 20px; letter-spacing: -.35px; }
.bell { width: 18px; height: 19px; margin-left: 10px; }
```
